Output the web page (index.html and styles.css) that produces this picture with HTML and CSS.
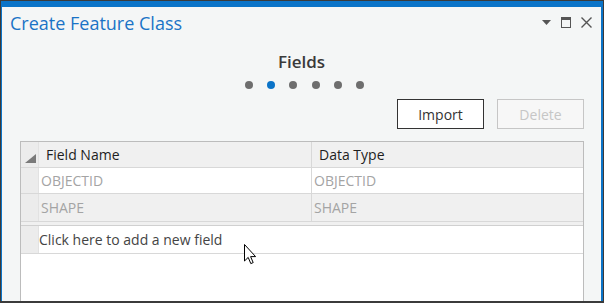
FILE: index.html
```html
<!DOCTYPE html>
<html lang="en">
<head>
    <meta charset="UTF-8">
    <title>Create Feature Class</title>
    <link rel="stylesheet" href="styles.css">
</head>
<body>

<div class="window">
    <div class="pane">

        <!-- Pane title bar -->
        <div class="titlebar">
            <span class="title">Create Feature Class</span>
            <div class="pane-tools">
                <svg width="9" height="5" viewBox="0 0 9 5"><path d="M0 0 H9 L4.5 5 Z" fill="#555"/></svg>
                <svg width="10" height="11" viewBox="0 0 10 11"><rect x="0.5" y="0.5" width="9" height="10" fill="none" stroke="#555"/><rect x="0" y="0" width="10" height="3" fill="#555"/></svg>
                <svg width="11" height="11" viewBox="0 0 11 11"><path d="M0.5 0.5 L10.5 10.5 M10.5 0.5 L0.5 10.5" stroke="#555" stroke-width="1.4"/></svg>
            </div>
        </div>

        <!-- Wizard step -->
        <div class="step">
            <h2>Fields</h2>
            <div class="dots">
                <span class="dot"></span>
                <span class="dot active"></span>
                <span class="dot"></span>
                <span class="dot"></span>
                <span class="dot"></span>
                <span class="dot"></span>
            </div>
        </div>

        <div class="actions">
            <button class="btn">Import</button>
            <button class="btn" disabled>Delete</button>
        </div>

        <!-- Fields grid -->
        <div class="grid">
            <div class="row head">
                <div class="rh">
                    <svg width="11" height="9" viewBox="0 0 11 9"><path d="M11 0 V9 H0 Z" fill="#7a7a7a"/></svg>
                </div>
                <div class="cell name">Field Name</div>
                <div class="cell">Data Type</div>
            </div>
            <div class="row locked">
                <div class="rh"></div>
                <div class="cell name">OBJECTID</div>
                <div class="cell">OBJECTID</div>
            </div>
            <div class="row locked alt">
                <div class="rh"></div>
                <div class="cell name">SHAPE</div>
                <div class="cell">SHAPE</div>
            </div>
            <div class="split"></div>
            <div class="row new">
                <div class="rh"></div>
                <div class="cell wide">Click here to add a new field</div>
            </div>

            <!-- mouse pointer -->
            <svg class="pointer" width="13" height="21" viewBox="0 0 13 21">
                <path d="M0.5 0.5 V17 L4.2 13.4 L6.8 19.6 L9.2 18.6 L6.6 12.6 L11.6 12.6 Z" fill="#fff" stroke="#000" stroke-width="1" stroke-linejoin="round"/>
            </svg>
        </div>

    </div>
</div>

</body>
</html>
```

FILE: styles.css
```css
body {
    margin: 0;
    font-family: "Open Sans", sans-serif;
    background: #3b3b3b;
}

/* Outer docked window */
.window {
    width: 604px;
    height: 303px;
    box-sizing: border-box;
    border: 1px solid #3b3b3b;
    border-bottom-width: 2px;
    overflow: hidden;
}

.pane {
    height: 100%;
    box-sizing: border-box;
    background: #f4f6f6;
    border-top: 6px solid #0b74c8;
    border-left: 1px solid #0b74c8;
    border-right: 2px solid #0b74c8;
}

/* Title bar */
.titlebar {
    display: flex;
    align-items: center;
    justify-content: space-between;
    height: 31px;
    padding: 0 9px 0 8px;
}

.title {
    font-size: 18px;
    color: #1a73c6;
}

.pane-tools {
    display: flex;
    align-items: center;
    gap: 10px;
}

/* Step indicator */
.step {
    text-align: center;
    padding-top: 13px;
}

.step h2 {
    margin: 0;
    font-size: 17px;
    font-weight: 600;
    color: #3a3a3a;
    line-height: 22px;
}

.dots {
    display: flex;
    justify-content: center;
    gap: 14.4px;
    margin-top: 8px;
    padding-left: 6px;
}

.dot {
    width: 8px;
    height: 8px;
    border-radius: 50%;
    background: #6e6e6e;
}

.dot.active {
    background: #0b74c8;
}

/* Buttons */
.actions {
    display: flex;
    justify-content: flex-end;
    gap: 13px;
    margin: 10px 17px 0 0;
}

.btn {
    width: 87px;
    height: 30px;
    font-family: inherit;
    font-size: 14px;
    color: #333;
    background: #fff;
    border: 1px solid #333;
}

.btn:disabled {
    color: #c6c6c6;
    background: #f7f7f7;
    border-color: #c6c6c6;
}

/* Grid */
.grid {
    position: relative;
    margin: 12px 17px 0 18px;
    height: 200px;
    background: #fff;
    border: 1px solid #bcbcbc;
    border-bottom: none;
    font-size: 14px;
}

.row {
    display: flex;
    height: 25px;
    border-bottom: 1px solid #d8d8d8;
}

.rh {
    width: 18px;
    flex-shrink: 0;
    background: #ececec;
    border-right: 1px solid #e2e2e2;
    display: flex;
    align-items: flex-end;
    justify-content: flex-end;
    padding: 0 2px 4px 0;
    box-sizing: border-box;
}

.cell {
    flex: 1;
    display: flex;
    align-items: center;
    padding-left: 2px;
    white-space: nowrap;
}

.cell.name {
    flex: 0 0 270px;
    border-right: 1px solid #d8d8d8;
}

.head {
    background: #f0f0f0;
}

.head .cell {
    color: #1e1e1e;
    padding-left: 7px;
}

.head .cell.name {
    flex-basis: 265px;
}

.locked .cell {
    color: #a4a4a4;
}

.alt {
    height: 27px;
}

.alt .cell {
    background: #f0f0f0;
}

.split {
    height: 3px;
    background: #f0f0f0;
    border-bottom: 1px solid #d0d0d0;
}

.new {
    height: 27px;
}

.new .cell {
    color: #444;
    padding-left: 0;
}

.pointer {
    position: absolute;
    left: 223px;
    top: 102px;
}
```
